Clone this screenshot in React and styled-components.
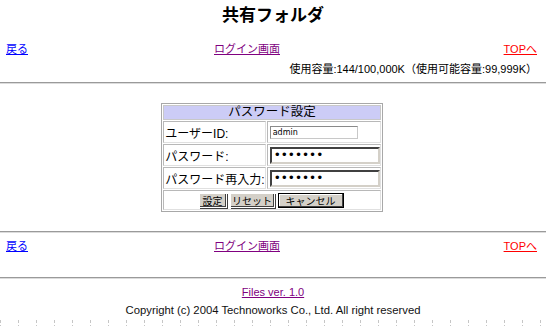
import React from "react";
import styled, { createGlobalStyle } from "styled-components";

const GlobalStyle = createGlobalStyle`
  html, body {
    margin: 0;
    background: #fff;
  }
  body {
    font-family: "Liberation Sans", "Noto Sans CJK JP", sans-serif;
    font-size: 11px;
    color: #000;
  }
  body::before,
  body::after {
    content: "";
    position: fixed;
    inset: 0;
    z-index: -1;
    pointer-events: none;
  }
  body::before {
    background: repeating-linear-gradient(to right, #c6c6c6 0 1px, transparent 1px 18px);
    -webkit-mask-image: repeating-linear-gradient(to bottom, #000 0 3px, transparent 3px 5px);
    mask-image: repeating-linear-gradient(to bottom, #000 0 3px, transparent 3px 5px);
  }
  body::after {
    background: repeating-linear-gradient(to bottom, transparent 0 7px, #c6c6c6 7px 8px, transparent 8px 18px);
    -webkit-mask-image: repeating-linear-gradient(to right, #000 0 3px, transparent 3px 5px);
    mask-image: repeating-linear-gradient(to right, #000 0 3px, transparent 3px 5px);
  }
`;

const Page = styled.div`
  width: 546px;
`;

const Title = styled.h1`
  margin: 0;
  height: 28px;
  line-height: 28px;
  text-align: center;
  font-size: 17px;
  font-weight: bold;
  font-family: "Noto Sans CJK JP", sans-serif;
`;

const NavRow = styled.div`
  display: grid;
  grid-template-columns: 175px 132px 1fr;
  padding: 0 9px 0 6px;
  margin-top: ${(p) => p.top}px;
  line-height: 16px;
`;

const NavLink = styled.a`
  color: ${(p) => p.color};
  text-decoration: underline;
  text-align: ${(p) => p.align || "left"};
`;

const Usage = styled.div`
  margin-top: 4px;
  padding-right: 9px;
  text-align: right;
  line-height: 16px;
  color: #000;
`;

const Rule = styled.hr`
  margin: ${(p) => p.top}px 0 0;
  height: 0;
  border: 0;
  border-top: 1px solid #9a9a9a;
  border-bottom: 1px solid #dcdcdc;
`;

const FormWrap = styled.div`
  display: flex;
  justify-content: center;
  margin-top: 19px;
  padding-right: 2px;
`;

const FormTable = styled.table`
  width: 221px;
  border: 1px solid #a8a8a8;
  border-spacing: 1px;
  font-size: 12px;
  font-family: "Liberation Sans", "Noto Sans CJK JP", sans-serif;
  background: rgba(255, 255, 255, 0.9);
`;

const HeadCell = styled.th`
  background: #ccccf6;
  font-weight: normal;
  font-size: 12.5px;
  height: 13px;
  line-height: 13px;
  padding: 0;
  border: 1px solid #c8c8c8;
`;

const LabelCell = styled.td`
  width: 100px;
  height: 20px;
  padding: 0 0 0 1px;
  border: 1px solid #b8b8b8;
  border-right-color: #e0e0e0;
  border-bottom-color: #e0e0e0;
  white-space: nowrap;
`;

const FieldCell = styled.td`
  padding: 0 0 0 2px;
  border: 1px solid #b8b8b8;
  border-right-color: #e0e0e0;
  border-bottom-color: #e0e0e0;
`;

const ButtonCell = styled.td`
  text-align: center;
  height: 18px;
  padding: 0;
  border: 1px solid #b8b8b8;
  border-right-color: #e0e0e0;
  border-bottom-color: #e0e0e0;
`;

const TextInput = styled.input`
  box-sizing: border-box;
  display: block;
  width: ${(p) => p.w}px;
  height: ${(p) => p.h}px;
  padding: 0 2px;
  font-family: "DejaVu Sans", sans-serif;
  font-size: ${(p) => (p.type === "password" ? 12 : 8)}px;
  background: #fff;
  color: #000;
  border: ${(p) => (p.thick ? 2 : 1)}px solid;
  border-color: ${(p) => (p.thick ? "#404040 #d4d0c8 #d4d0c8 #404040" : "#8a8a8a #c8c8c8 #c8c8c8 #8a8a8a")};
  outline: none;
`;

const Buttons = styled.div`
  display: inline-flex;
  gap: 3px;
  margin-right: 2px;
  vertical-align: middle;
`;

const Button = styled.button`
  box-sizing: border-box;
  width: ${(p) => p.w}px;
  height: 15px;
  padding: 0;
  white-space: nowrap;
  overflow: hidden;
  font-family: "Noto Sans CJK JP", sans-serif;
  font-size: 10px;
  line-height: 11px;
  color: #000;
  background: #d4d0c8;
  border: 1px solid ${(p) => (p.primary ? "#000" : "#fff")};
  box-shadow: ${(p) =>
    p.primary
      ? "inset -1px -1px #404040, inset 1px 1px #fff"
      : "inset -1px -1px #404040, 1px 1px #404040"};
  cursor: default;
`;

const Footer = styled.div`
  margin-top: 5px;
  text-align: center;
  line-height: 16px;
`;

const FooterLink = styled.a`
  color: #800080;
  text-decoration: underline;
`;

const Copyright = styled.div`
  margin-top: 2px;
  line-height: 16px;
  font-size: 11.3px;
  color: #111;
`;

const Nav = ({ top }) => (
  <NavRow top={top}>
    <NavLink href="#" color="#0000ff">戻る</NavLink>
    <NavLink href="#" color="#800080" align="center">ログイン画面</NavLink>
    <NavLink href="#" color="#ff0000" align="right">TOPへ</NavLink>
  </NavRow>
);

export default function App() {
  return (
    <Page>
      <GlobalStyle />
      <Title>共有フォルダ</Title>
      <Nav top={13} />
      <Usage>使用容量:144/100,000K（使用可能容量:99,999K）</Usage>
      <Rule top={5} />

      <FormWrap>
        <FormTable>
          <tbody>
            <tr>
              <HeadCell colSpan={2}>パスワード設定</HeadCell>
            </tr>
            <tr>
              <LabelCell>ユーザーID:</LabelCell>
              <FieldCell>
                <TextInput type="text" w={88} h={13} defaultValue="admin" readOnly />
              </FieldCell>
            </tr>
            <tr>
              <LabelCell>パスワード:</LabelCell>
              <FieldCell>
                <TextInput type="password" thick w={110} h={17} defaultValue="1234567" readOnly />
              </FieldCell>
            </tr>
            <tr>
              <LabelCell>パスワード再入力:</LabelCell>
              <FieldCell>
                <TextInput type="password" thick w={110} h={17} defaultValue="1234567" readOnly />
              </FieldCell>
            </tr>
            <tr>
              <ButtonCell colSpan={2}>
                <Buttons>
                  <Button type="button" w={28}>設定</Button>
                  <Button type="button" w={45}>リセット</Button>
                  <Button type="button" w={66} primary>キャンセル</Button>
                </Buttons>
              </ButtonCell>
            </tr>
          </tbody>
        </FormTable>
      </FormWrap>

      <Rule top={19} />
      <Nav top={5} />
      <Rule top={23} />
      <Footer>
        <FooterLink href="#">Files ver. 1.0</FooterLink>
        <Copyright>Copyright (c) 2004 Technoworks Co., Ltd. All right reserved</Copyright>
      </Footer>
    </Page>
  );
}
